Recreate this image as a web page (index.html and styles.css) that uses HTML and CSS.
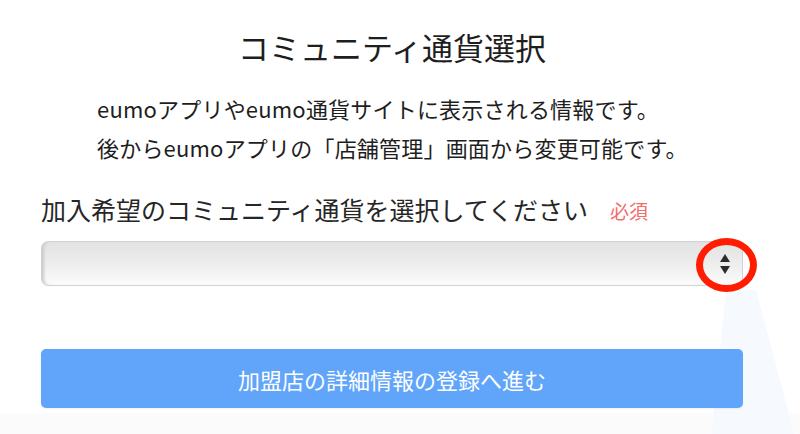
FILE: index.html
```html
<!DOCTYPE html>
<html lang="ja">
<head>
<meta charset="utf-8">
<link rel="stylesheet" href="styles.css">
</head>
<body>
<div class="page">
  <h1 class="title">コミュニティ通貨選択</h1>
  <p class="desc">eumoアプリやeumo通貨サイトに表示される情報です。<br>後からeumoアプリの「店舗管理」画面から変更可能です。</p>
  <div class="label-row">
    <span class="label">加入希望のコミュニティ通貨を選択してください</span>
    <span class="required">必須</span>
  </div>
  <div class="select-wrap">
    <div class="select">
      <svg class="arrows" width="12" height="22" viewBox="0 0 12 22">
        <polygon points="6,1 11,9 1,9" fill="#2b2b2b"/>
        <polygon points="1,13 11,13 6,21" fill="#2b2b2b"/>
      </svg>
    </div>
    <div class="mark"></div>
    <svg class="glow" width="100" height="150" viewBox="0 0 100 150"><polygon points="25,0 55,0 95,150 10,150" fill="#f6faff"/></svg>
  </div>
  <button class="submit">加盟店の詳細情報の登録へ進む</button>
</div>
<div class="bottom"></div>
</body>
</html>
```
FILE: styles.css
```css
* { box-sizing: border-box; }
html, body { margin: 0; padding: 0; background: #ffffff; }
body {
  width: 800px;
  height: 434px;
  overflow: hidden;
  font-family: "Noto Sans CJK JP", "Noto Sans", sans-serif;
  color: #222;
  position: relative;
}
.page {
  width: 702px;
  margin-left: 41px;
  padding-top: 26px;
  display: flex;
  flex-direction: column;
  position: relative;
  z-index: 1;
}
.title {
  margin: 0;
  font-size: 31px;
  font-weight: 400;
  line-height: 42px;
  text-align: center;
  color: #1e1e1e;
}
.desc {
  margin: 21px 0 0 56px;
  font-size: 22px;
  line-height: 39px;
  letter-spacing: 0.2px;
  color: #1e1e1e;
}
.label-row {
  margin-top: 25px;
  display: flex;
  align-items: center;
  gap: 22px;
  height: 34px;
}
.label {
  font-size: 25px;
  color: #262626;
}
.required {
  font-size: 19px;
  color: #f26b6b;
  padding-top: 3px;
}
.select-wrap {
  position: relative;
  margin-top: 15px;
}
.select {
  height: 45px;
  border: 1px solid #d2d2d2;
  border-radius: 7px;
  background: linear-gradient(#e2e2e2, #ececec 45%, #fbfbfb);
  box-shadow: inset 4px 0 3px -2px #c9c9c9;
  display: flex;
  align-items: center;
  justify-content: flex-end;
  padding-right: 11px;
}
.arrows { display: block; }
.mark {
  position: absolute;
  left: 655px;
  top: -3px;
  width: 61px;
  height: 54px;
  border: 7.5px solid #ff1c00;
  border-radius: 50%;
}
.glow {
  position: absolute;
  left: 660px;
  top: 49px;
  z-index: -1;
}
.submit {
  margin-top: 63px;
  height: 59px;
  border: none;
  border-radius: 5px;
  background: #60a5fa;
  color: #ffffff;
  font-family: "Noto Sans CJK JP", "Noto Sans", sans-serif;
  font-size: 22px;
  padding: 0;
  box-shadow: 0 1px 2px rgba(0,0,0,0.06);
}
.bottom {
  position: absolute;
  left: 0;
  right: 0;
  top: 413px;
  bottom: 0;
  background: #fbfbfb;
}
```
